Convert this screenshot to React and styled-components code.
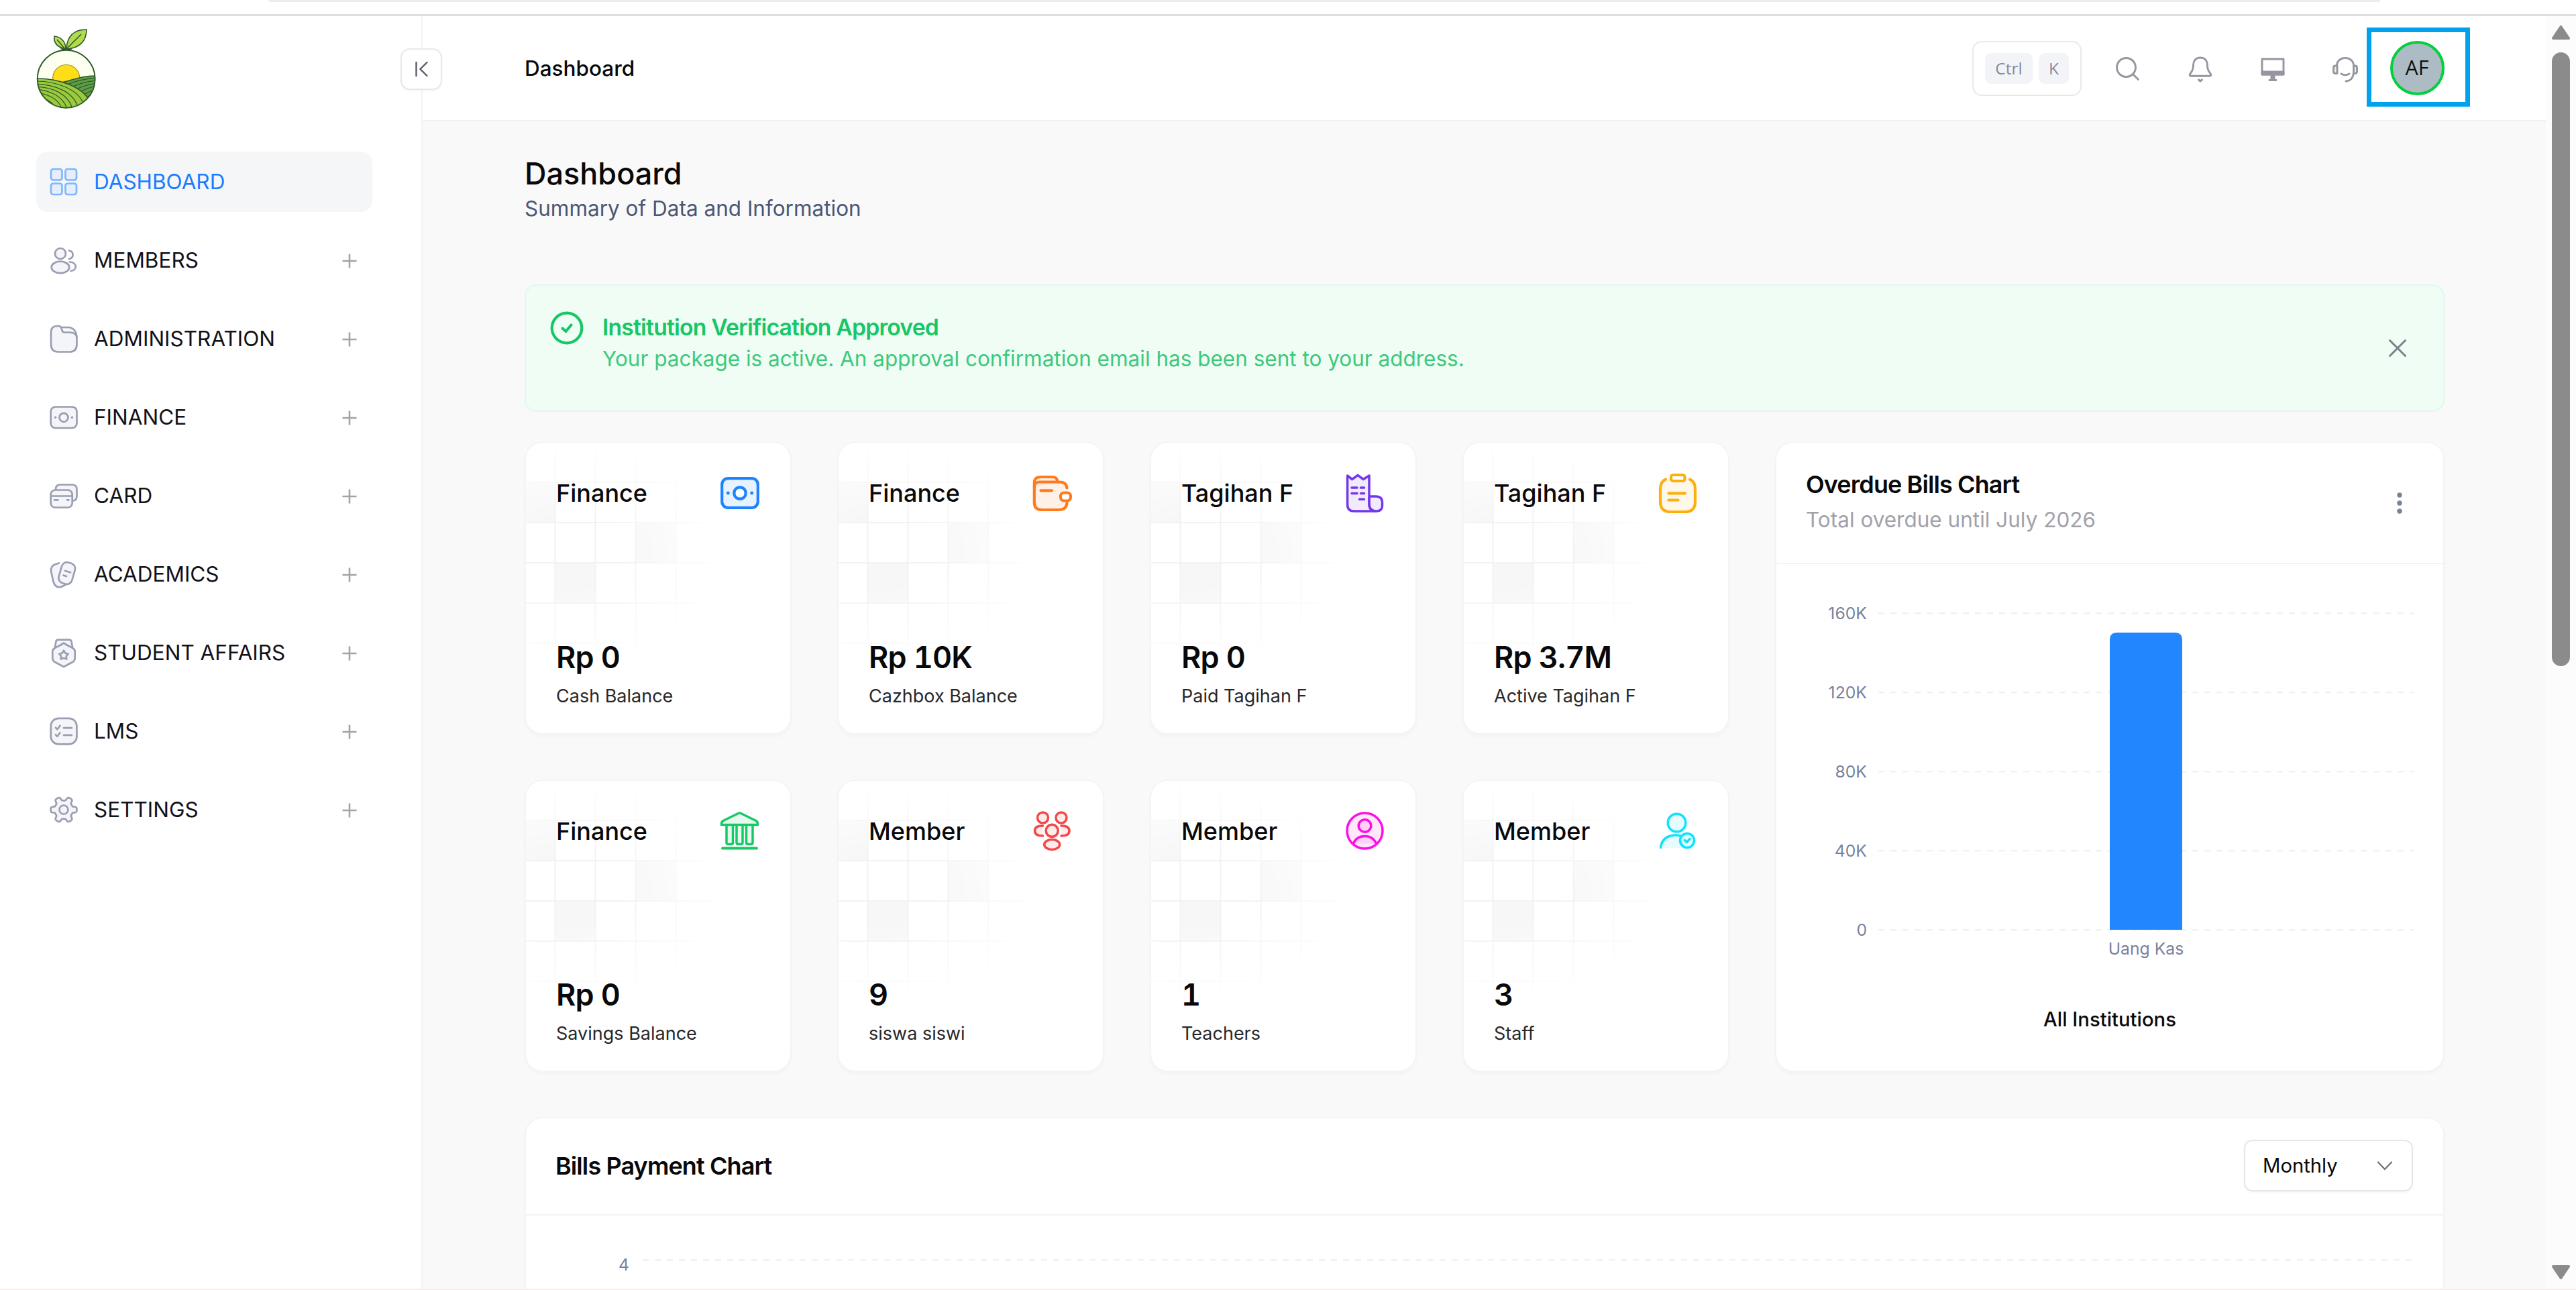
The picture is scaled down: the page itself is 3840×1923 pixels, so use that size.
import styled, { createGlobalStyle } from 'styled-components';

const menu = [
  { label: 'DASHBOARD', icon: 'dashboard', active: true },
  { label: 'MEMBERS', icon: 'members' },
  { label: 'ADMINISTRATION', icon: 'folder' },
  { label: 'FINANCE', icon: 'money' },
  { label: 'CARD', icon: 'cards' },
  { label: 'ACADEMICS', icon: 'notes' },
  { label: 'STUDENT AFFAIRS', icon: 'medal' },
  { label: 'LMS', icon: 'checklist' },
  { label: 'SETTINGS', icon: 'gear' },
];

const stats = [
  { title: 'Finance', value: 'Rp 0', label: 'Cash Balance', icon: 'cash', color: '#1b84ff' },
  { title: 'Finance', value: 'Rp 10K', label: 'Cazhbox Balance', icon: 'wallet', color: '#ff7a1a' },
  { title: 'Tagihan F', value: 'Rp 0', label: 'Paid Tagihan F', icon: 'receipt', color: '#7239ea' },
  { title: 'Tagihan F', value: 'Rp 3.7M', label: 'Active Tagihan F', icon: 'clipboard', color: '#fcb010' },
  { title: 'Finance', value: 'Rp 0', label: 'Savings Balance', icon: 'bank', color: '#17c964' },
  { title: 'Member', value: '9', label: 'siswa siswi', icon: 'people', color: '#f4484b' },
  { title: 'Member', value: '1', label: 'Teachers', icon: 'teacher', color: '#fb10e4' },
  { title: 'Member', value: '3', label: 'Staff', icon: 'staff', color: '#0de3fb' },
];

const ticks = ['160K', '120K', '80K', '40K', '0'];

const gearPath = (() => {
  const points = [];
  for (let i = 0; i < 120; i++) {
    const a = (i / 120) * Math.PI * 2;
    const r = 16.6 + 2.9 * Math.tanh(2.6 * Math.cos(6 * a));
    points.push(`${(21 + r * Math.cos(a)).toFixed(2)} ${(21 + r * Math.sin(a)).toFixed(2)}`);
  }
  return `M${points.join('L')}Z`;
})();

const menuIcons = {
  dashboard: (
    <>
      <rect x="2" y="2" width="16.5" height="16.5" rx="3.5" />
      <rect x="23.5" y="2" width="16.5" height="16.5" rx="3.5" />
      <rect x="2" y="23.5" width="16.5" height="16.5" rx="3.5" />
      <rect x="23.5" y="23.5" width="16.5" height="16.5" rx="3.5" />
    </>
  ),
  members: (
    <>
      <circle cx="16" cy="11" r="8" />
      <ellipse cx="16" cy="31.4" rx="13.3" ry="8.7" />
      <path fill="none" d="M29 6.5C36.5 8 36.5 17.5 29 19M30 23.5C41.5 24.5 41.5 35.5 31.5 37" />
    </>
  ),
  folder: (
    <>
      <path d="M17 4H28Q39 4.500 40.300 18" />
      <path d="M2 12Q2 2 11 2H13.500Q16.500 2 17.500 5L18.500 8.500Q19.500 11.500 23 11.500H30Q40.500 12 40.500 20V29Q40.500 40.500 30 40.500H12.500Q2 40.500 2 29Z" />
    </>
  ),
  money: (
    <>
      <rect x="1.7" y="5.500" width="38.800" height="31.500" rx="7" />
      <circle cx="21" cy="21.300" r="6.500" />
      <path d="M8.500 21.200h.2M33.300 21.200h.2" strokeWidth="3.400" />
    </>
  ),
  cards: (
    <>
      <path d="M9 12V11.500Q9 4.500 16 4.500H33.500Q40.500 4.500 40.500 11.500V21.500Q40.500 28.500 34 28.500" />
      <rect x="1.700" y="12.500" width="32" height="26" rx="6.500" />
      <path d="M2 21.500H33.500M7 27.300H12.500M26 27.300H28.500" />
    </>
  ),
  notes: (
    <>
      <path d="M14 4.500L9 6Q1 8.500 2.200 17L5.500 32Q8.500 42 17 40L24 36.500" />
      <rect x="15.500" y="3.500" width="20.500" height="32" rx="8" transform="rotate(16 25.800 19.500)" />
      <path d="M23 16L31 18.300M20.500 22.600L25 24" />
    </>
  ),
  medal: (
    <>
      <path d="M8 13L9.300 5Q9.800 1.700 13 1.700H29Q32.200 1.700 32.700 5L34 13" />
      <path d="M21 6.500Q23 8.500 33.500 13.500Q37.700 16 37.700 19V29Q37.700 32.500 34.500 34.800L21 42L7.500 34.800Q4.300 32.500 4.300 29V19Q4.300 16 8.500 13.500Q19 8.500 21 6.500Z" />
      <path d="M21 17.700L23.300 21.600L27.700 22.700L24.800 26.100L25.200 30.600L21 28.900L16.800 30.600L17.200 26.100L14.300 22.700L18.700 21.600Z" />
    </>
  ),
  checklist: (
    <>
      <rect x="1.800" y="1.800" width="38.600" height="38.600" rx="11.500" />
      <path fill="none" d="M9 15.800L11.500 18.300L15.500 12.800M9 26.300L11.500 28.800L15.500 23.300M21 16.200H33M21 26.800H33" />
    </>
  ),
  gear: (
    <>
      <path d={gearPath} />
      <circle cx="21" cy="21" r="6.500" />
    </>
  ),
};

const statIcons = {
  cash: (
    <>
      <rect x="2.200" y="7.200" width="53.600" height="43.600" rx="9" />
      <circle cx="29" cy="29" r="8.700" fill="#fff" />
      <path d="M11.200 29h.2M46.600 29h.2" strokeWidth="4.800" />
    </>
  ),
  wallet: (
    <>
      <path d="M1.800 20V14Q1.800 5 11 5H28Q36.500 5 36.500 12.500" />
      <path d="M50.500 21.500Q50 12.500 39 12.500H10Q1.800 12.500 1.800 20.500V43Q1.800 54 13 54H38Q50 54 50.500 43.500" />
      <rect x="41" y="28.500" width="15" height="12" rx="5" fill="#fff" />
      <path d="M11.500 25.300H28" />
    </>
  ),
  receipt: (
    <>
      <path d="M35 34H45Q54.500 34 54.500 43V48Q54.500 56 45.500 56Q35.500 56 35 46Z" />
      <path d="M2.600 3L9.600 8.500L18 2.300L26.300 8.500L35 3V46Q35.500 56 45.500 56H12Q2.600 56 2.600 46Z" />
      <path d="M9 21H17M22.500 21H27.500M9 29.600H17M22.500 29.600H27.500M20.500 38.300H27.500" />
    </>
  ),
  clipboard: (
    <>
      <path d="M11 8.500Q3 12 3 23V42Q3 57 18 57H40Q55 57 55 42V23Q55 12 47 8.500" />
      <rect x="19" y="2" width="20.500" height="9" rx="3" fill="#fff" />
      <path d="M15.500 29.300H40M15.500 39.500H29.500" />
    </>
  ),
  bank: (
    <>
      <path d="M26.500 2.500Q28.500 1.500 30.500 2.500L53 13.500Q56 15.500 55.500 19.500H1.500Q1 15.500 4 13.500Z" />
      <path d="M9 20V46Q9 48.500 11.500 48.500H16Q18.500 48.500 18.500 46V20M24 20V46Q24 48.500 26.500 48.500H30.500Q33 48.500 33 46V20M38.500 20V46Q38.500 48.500 41 48.500H45.500Q48 48.500 48 46V20" />
      <path d="M3 54.600H54" strokeWidth="4" />
    </>
  ),
  people: (
    <>
      <circle cx="14.500" cy="9" r="8" />
      <circle cx="42" cy="9" r="8" />
      <circle cx="28.200" cy="28.300" r="9" />
      <ellipse cx="28.200" cy="49" rx="11.500" ry="7.500" />
      <path d="M14.500 21Q2.500 21 2.500 28.500Q2.500 36 14.500 36M42 21Q54 21 54 28.500Q54 36 42 36" />
    </>
  ),
  teacher: (
    <>
      <circle cx="28.500" cy="28.500" r="26.500" />
      <circle cx="28.500" cy="21" r="9.300" />
      <path d="M11.500 47.500Q16 36.500 28.500 36.500Q41 36.500 45.500 47.500" />
    </>
  ),
  staff: (
    <>
      <circle cx="27.500" cy="16.500" r="13.300" />
      <path stroke="none" d="M3.500 54Q6 35 27 35Q36 35 40 40V54Z" />
      <path fill="none" d="M3.500 53.500Q6 35 27 35Q30 35 33 36" />
      <circle cx="43" cy="43" r="10.500" />
      <path fill="none" d="M39.500 42.500L42.500 45.500L47 40.500" />
    </>
  ),
};

function GridPattern({ id }) {
  return (
    <Pattern viewBox="0 0 300 330">
      <defs>
        <radialGradient id={id} cx="60" cy="160" r="250" gradientUnits="userSpaceOnUse" gradientTransform="translate(0 55) scale(1 .68)">
          <stop offset="0.3" stopColor="#fff" />
          <stop offset="1" stopColor="#fff" stopOpacity="0" />
        </radialGradient>
        <mask id={`${id}-mask`}>
          <rect width="300" height="330" fill={`url(#${id})`} />
        </mask>
      </defs>
      <g mask={`url(#${id}-mask)`}>
        <path d="M0 59h43v60H0zM163 119h60v60h-60zM43 179h60v60H43z" fill="#f7f7f8" />
        <path
          d="M43.500 10V320M103.500 10V320M163.500 10V320M223.500 10V320M0 59H283M0 119H283M0 179H283M0 239H283M0 299H283"
          stroke="#f2f2f4"
          strokeWidth="2"
        />
      </g>
    </Pattern>
  );
}

function Logo() {
  return (
    <svg width="90" height="120" viewBox="0 0 90 120" fill="none" stroke="#2f5a2c" strokeWidth="1.600">
      <defs>
        <clipPath id="globe">
          <circle cx="44.700" cy="75.700" r="43" />
        </clipPath>
      </defs>
      <path d="M44 31C29 28 26 20 27 12C37 13 44 20 44 31Z" fill="#b9dc55" />
      <path d="M31 17L43 31" />
      <path d="M45 31C46 13 55 2 75 2C75 20 64 30 45 31Z" fill="#b3d94c" />
      <path d="M67 9L46 30" />
      <path d="M38 31H52L48 34H42Z" fill="#2f5a2c" />
      <g clipPath="url(#globe)">
        <rect y="30" width="90" height="90" fill="#fdfff0" stroke="none" />
        <circle cx="44.700" cy="74.500" r="20" fill="#ffde17" stroke="#a38f1f" strokeWidth="1.200" />
        <path d="M38 81C55 77 68 71 90 71V120H50Z" fill="#5f9e45" />
        <path d="M46 84Q66 76 90 74M52 88Q70 80 90 78M57 92Q74 84 90 82M62 97Q76 89 90 86M66 102Q78 94 90 91M70 107Q80 99 90 96M74 112Q84 104 90 100" strokeWidth="1.200" />
        <path d="M0 75C32 75 66 86 78 106L70 120H0Z" fill="#9bca3c" />
        <path d="M0 79C28 79 62 90 70 112M0 83C26 84 56 94 62 118M0 87C24 88 48 98 54 120M0 91C22 93 40 102 46 120M0 96C18 98 34 106 38 120M2 102C16 104 26 112 29 120" strokeWidth="1.200" />
      </g>
      <circle cx="44.700" cy="75.700" r="43" strokeWidth="1.900" />
    </svg>
  );
}

function OverdueChart() {
  return (
    <ChartSvg viewBox="0 0 994 599">
      {ticks.map((tick, i) => (
        <g key={tick}>
          <ChartText x="135" y={82 + i * 118} textAnchor="end">
            {tick}
          </ChartText>
          <path d={`M152 ${73 + i * 118}H950`} stroke="#f0f0f3" strokeWidth="2.250" strokeDasharray="9 9" />
        </g>
      ))}
      <path d="M497 545V113Q497 102 508 102H594Q605 102 605 113V545Z" fill="#2286ff" />
      <ChartText x="551" y="582" textAnchor="middle">
        Uang Kas
      </ChartText>
    </ChartSvg>
  );
}

function Sidebar() {
  return (
    <SidebarPanel>
      <LogoSlot>
        <Logo />
      </LogoSlot>
      <Menu>
        {menu.map(({ label, icon, active }) => (
          <MenuItem key={label} $active={active}>
            <MenuIcon viewBox="0 0 42 42" $active={active}>
              {menuIcons[icon]}
            </MenuIcon>
            <MenuLabel>{label}</MenuLabel>
            {!active && (
              <PlusIcon viewBox="0 0 22 22">
                <path d="M11 .5V21.500M.5 11H21.500" />
              </PlusIcon>
            )}
          </MenuItem>
        ))}
      </Menu>
      <CollapseButton aria-label="Collapse">
        <svg width="20" height="24" viewBox="0 0 20 24" fill="none" stroke="#5b5c66" strokeWidth="2.400" strokeLinecap="round">
          <path d="M2.500 2V22M18.500 2L8.500 12L18.500 22" />
        </svg>
      </CollapseButton>
    </SidebarPanel>
  );
}

function TopBar() {
  return (
    <Header>
      <Crumb>Dashboard</Crumb>
      <Shortcut>
        <Key $width="71px">Ctrl</Key>
        <Key $width="45px">K</Key>
      </Shortcut>
      <HeaderIcons>
        <HeaderIcon viewBox="0 0 38 38">
          <circle cx="16.500" cy="16.500" r="14" />
          <path d="M27 27L34.500 34.500" />
        </HeaderIcon>
        <HeaderIcon viewBox="0 0 38 38">
          <path d="M19 2C11.500 2 8.500 7.500 8.500 13C8.500 20 6.500 22 3.500 26.500C2.500 28.300 3.500 29.300 5 29.300H33C34.500 29.300 35.500 28.300 34.500 26.500C31.500 22 29.500 20 29.500 13C29.500 7.500 26.500 2 19 2Z" />
          <path d="M16.500 35L19 37L21.500 35" />
        </HeaderIcon>
        <HeaderIcon viewBox="0 0 38 38">
          <path d="M3 4H35V27H3Z" />
          <path d="M3 23H35V27H3ZM17 28H21V34H17ZM14 35.500H24" fill="#95969f" />
        </HeaderIcon>
        <HeaderIcon viewBox="0 0 38 38">
          <path d="M6.500 14C6.500 -1.500 31.500 -1.500 31.500 14V24Q30.500 36.500 20 37M13 26Q19 29.500 25 26" />
          <path d="M7 14H4.500Q1.500 14 1.500 17V22.500Q1.500 25.500 4.500 25.500H7ZM31.500 14H33.500Q36.500 14 36.500 17V22.500Q36.500 25.500 33.500 25.500H31.500Z" fill="#eeeef2" />
        </HeaderIcon>
      </HeaderIcons>
      <AvatarFrame>
        <Avatar>AF</Avatar>
      </AvatarFrame>
    </Header>
  );
}

function StatCard({ id, title, value, label, icon, color }) {
  return (
    <StatBox>
      <GridPattern id={id} />
      <StatHead>
        <StatTitle>{title}</StatTitle>
        <StatIcon viewBox="0 0 58 58" $color={color} $thin={['receipt', 'people', 'teacher', 'staff', 'bank'].includes(icon)}>
          {statIcons[icon]}
        </StatIcon>
      </StatHead>
      <StatFoot>
        <StatValue>{value}</StatValue>
        <StatLabel>{label}</StatLabel>
      </StatFoot>
    </StatBox>
  );
}

export default function App() {
  return (
    <Page>
      <GlobalStyle />
      <BrowserEdge>
        <AddressBar />
      </BrowserEdge>
      <Body>
        <Sidebar />
        <Main>
          <TopBar />
          <Content>
            <PageTitle>Dashboard</PageTitle>
            <PageSubtitle>Summary of Data and Information</PageSubtitle>

            <Alert>
              <svg width="50" height="50" viewBox="0 0 50 50" fill="none" stroke="#17c666" strokeWidth="4.200" strokeLinecap="round" strokeLinejoin="round">
                <circle cx="25" cy="25" r="22.300" />
                <path d="M18.500 25.500L23.500 30L31.500 20.500" />
              </svg>
              <AlertText>
                <AlertTitle>Institution Verification Approved</AlertTitle>
                <AlertBody>Your package is active. An approval confirmation email has been sent to your address.</AlertBody>
              </AlertText>
              <svg width="28" height="28" viewBox="0 0 28 28" stroke="#7f828a" strokeWidth="3" strokeLinecap="round">
                <path d="M2.500 2.500L25.500 25.500M25.500 2.500L2.500 25.500" />
              </svg>
            </Alert>

            <Overview>
              <StatGrid>
                {stats.map((stat, i) => (
                  <StatCard key={i} id={`pattern${i}`} {...stat} />
                ))}
              </StatGrid>
              <Card>
                <OverdueHeader>
                  <div>
                    <CardTitle>Overdue Bills Chart</CardTitle>
                    <CardSubtitle>Total overdue until July 2026</CardSubtitle>
                  </div>
                  <svg width="40" height="40" viewBox="0 0 40 40" fill="#78829d">
                    <circle cx="20" cy="8" r="3.700" />
                    <circle cx="20" cy="20" r="3.700" />
                    <circle cx="20" cy="32" r="3.700" />
                  </svg>
                </OverdueHeader>
                <OverdueChart />
                <ChartCaption>All Institutions</ChartCaption>
              </Card>
            </Overview>

            <PaymentCard>
              <PaymentHeader>
                <CardTitle>Bills Payment Chart</CardTitle>
                <Select>
                  Monthly
                  <svg width="24" height="16" viewBox="0 0 24 16" fill="none" stroke="#71717a" strokeWidth="2.300" strokeLinecap="round" strokeLinejoin="round">
                    <path d="M2 2.500L12 13L22 2.500" />
                  </svg>
                </Select>
              </PaymentHeader>
              <ChartSvg viewBox="0 0 2858 200">
                <ChartText x="154" y="82" textAnchor="end">
                  4
                </ChartText>
                <path d="M174 66H2820" stroke="#f0f0f3" strokeWidth="2.250" strokeDasharray="9 9" />
              </ChartSvg>
            </PaymentCard>
          </Content>
        </Main>
        <Scrollbar>
          <Arrow viewBox="0 0 27 21">
            <path d="M13.500 2L25 19H2Z" />
          </Arrow>
          <Thumb />
          <Arrow viewBox="0 0 27 21">
            <path d="M13.500 19L25 2H2Z" />
          </Arrow>
        </Scrollbar>
      </Body>
    </Page>
  );
}

const GlobalStyle = createGlobalStyle`
  * {
    box-sizing: border-box;
  }

  body {
    margin: 0;
    overflow: hidden;
    font-family: Inter, 'Liberation Sans', sans-serif;
    color: #09090b;
  }

  svg {
    display: block;
    flex-shrink: 0;
  }
`;

const Page = styled.div`
  display: flex;
  flex-direction: column;
  width: 3840px;
  height: 1923px;
  overflow: hidden;
  background: #fff;
  border-bottom: 2px solid #fbe9ec;
`;

const BrowserEdge = styled.div`
  flex-shrink: 0;
  height: 24px;
  padding: 0 292px 0 400px;
  border-bottom: 3px solid #dedede;
`;

const AddressBar = styled.div`
  height: 3px;
  background: #ececec;
  border-radius: 0 0 6px 6px;
`;

const Body = styled.div`
  display: flex;
  flex: 1;
  min-height: 0;
`;

const SidebarPanel = styled.aside`
  position: relative;
  flex-shrink: 0;
  width: 630px;
  padding: 18px 73px 0 54px;
  border-right: 2px solid #f3f3f4;
`;

const LogoSlot = styled.div`
  height: 184px;
`;

const Menu = styled.nav`
  display: grid;
  gap: 27px;
`;

const MenuItem = styled.div`
  display: flex;
  align-items: center;
  height: 90px;
  padding: 0 23px 0 20px;
  border-radius: 17px;
  background: ${({ $active }) => ($active ? '#f5f6f8' : 'transparent')};
  color: ${({ $active }) => ($active ? '#1b7cff' : '#111118')};
`;

const MenuIcon = styled.svg`
  width: 42px;
  height: 42px;
  margin-right: 24px;
  overflow: visible;
  fill: ${({ $active }) => ($active ? '#e6eefb' : '#f3f5f9')};
  stroke: ${({ $active }) => ($active ? '#7fb6ff' : '#9b9db3')};
  stroke-width: 2.7;
  stroke-linecap: round;
  stroke-linejoin: round;
`;

const MenuLabel = styled.span`
  flex: 1;
  margin-top: -1px;
  font-size: 31.5px;
`;

const PlusIcon = styled.svg`
  width: 22px;
  height: 22px;
  margin-top: 2px;
  stroke: #a2a2a8;
  stroke-width: 2.6;
`;

const CollapseButton = styled.button`
  position: absolute;
  top: 48px;
  right: -31px;
  display: flex;
  align-items: center;
  justify-content: center;
  width: 62px;
  height: 62px;
  border: 2px solid #e8e8ea;
  border-radius: 14px;
  background: #fff;
  box-shadow: 0 2px 3px rgba(0, 0, 0, 0.04);
`;

const Main = styled.main`
  display: flex;
  flex-direction: column;
  width: 3165px;
  background: #f9f9f9;
`;

const Header = styled.header`
  display: flex;
  align-items: center;
  flex-shrink: 0;
  height: 157px;
  padding: 0 113px 0 152px;
  background: #fff;
  border-bottom: 2px solid #f1f1f2;
`;

const Crumb = styled.span`
  flex: 1;
  margin-top: -1px;
  font-size: 31.5px;
  font-weight: 500;
`;

const Shortcut = styled.div`
  display: flex;
  align-items: center;
  justify-content: center;
  gap: 9px;
  width: 163px;
  height: 82px;
  margin-right: 50px;
  border: 2px solid #e9e9eb;
  border-radius: 14px;
`;

const Key = styled.span`
  width: ${({ $width }) => $width};
  border-radius: 9px;
  background: #f3f4f7;
  color: #858b99;
  font: 500 24.5px/46px 'Open Sans', sans-serif;
  text-align: center;
`;

const HeaderIcons = styled.div`
  display: flex;
  gap: 70px;
  margin: 2px 13px 0 0;
`;

const HeaderIcon = styled.svg`
  width: 38px;
  height: 38px;
  overflow: visible;
  fill: none;
  stroke: #95969f;
  stroke-width: 2.9;
  stroke-linecap: round;
  stroke-linejoin: round;
`;

const AvatarFrame = styled.div`
  display: flex;
  align-items: center;
  justify-content: center;
  width: 154px;
  height: 118px;
  margin-top: -4px;
  border: 7px solid #00a2ee;
`;

const Avatar = styled.div`
  width: 81px;
  height: 81px;
  margin: 4px 4px 0 0;
  border: 4.5px solid #04cf3f;
  border-radius: 50%;
  background: #adbcc4;
  color: #10100e;
  font: 400 30.5px/70px 'Open Sans', sans-serif;
  text-align: center;
`;

const Content = styled.div`
  flex: 1;
  min-height: 0;
  padding: 51px 151px 0 152px;
  overflow: hidden;
`;

const PageTitle = styled.h1`
  margin: 0 0 2px;
  font-size: 45px;
  font-weight: 500;
  line-height: 54px;
`;

const PageSubtitle = styled.p`
  margin: 0 0 90px;
  color: #4b5675;
  font-size: 31.5px;
  line-height: 46px;
`;

const Alert = styled.section`
  display: flex;
  align-items: center;
  height: 190px;
  margin-bottom: 44px;
  padding: 0 54px 0 36px;
  border: 2px solid #e0f9eb;
  border-radius: 18px;
  background: #effdf4;

  > svg:first-child {
    align-self: flex-start;
    margin-top: 38px;
  }
`;

const AlertText = styled.div`
  display: grid;
  gap: 4px;
  flex: 1;
  align-self: flex-start;
  margin: 42px 0 0 28px;
  color: #17c666;
`;

const AlertTitle = styled.strong`
  font-size: 33.75px;
  font-weight: 600;
  line-height: 40px;
  letter-spacing: -0.025em;
`;

const AlertBody = styled.span`
  color: #3dc97c;
  font-size: 31.5px;
  line-height: 46px;
`;

const Overview = styled.div`
  display: grid;
  grid-template-columns: 1796px 998px;
  gap: 68px;
  height: 940px;
  margin-bottom: 67px;
`;

const StatGrid = styled.div`
  display: grid;
  grid-template-columns: repeat(4, 398px);
  grid-template-rows: 1fr 1fr;
  gap: 67px 68px;
`;

const Card = styled.section`
  border: 2px solid #f4f4f5;
  border-radius: 27px;
  background: #fff;
  box-shadow: 0 4px 5px rgba(0, 0, 0, 0.025);
`;

const StatBox = styled(Card)`
  position: relative;
  display: flex;
  flex-direction: column;
  justify-content: space-between;
  padding: 46px 46px 37px 45px;
  overflow: hidden;
`;

const Pattern = styled.svg`
  position: absolute;
  top: 0;
  left: 0;
  width: 300px;
  height: 330px;
`;

const StatHead = styled.div`
  position: relative;
  display: flex;
  align-items: center;
  justify-content: space-between;
`;

const StatTitle = styled.h3`
  margin: 0;
  font-size: 36px;
  font-weight: 500;
`;

const StatIcon = styled.svg`
  width: 58px;
  height: 58px;
  overflow: visible;
  fill: ${({ $color }) => $color}1a;
  stroke: ${({ $color }) => $color};
  stroke-width: ${({ $thin }) => ($thin ? 3.5 : 4.2)};
  stroke-linecap: round;
  stroke-linejoin: round;
`;

const StatFoot = styled.div`
  position: relative;
  display: grid;
  gap: 18px;
`;

const StatValue = styled.span`
  font-size: 45px;
  font-weight: 600;
  line-height: 45px;
  letter-spacing: -0.02em;
  font-variant-numeric: tabular-nums;
`;

const StatLabel = styled.span`
  color: #27272a;
  font-size: 27px;
  line-height: 36px;
`;

const OverdueHeader = styled.header`
  display: flex;
  align-items: center;
  justify-content: space-between;
  height: 181px;
  padding: 0 45px 0 44px;
  border-bottom: 2px solid #f2f2f4;
`;

const CardTitle = styled.h2`
  margin: 0;
  font-size: 36px;
  font-weight: 600;
  line-height: 36px;
  letter-spacing: -0.025em;
`;

const CardSubtitle = styled.p`
  margin: 11px 0 -4px;
  color: #a1a1aa;
  font-size: 31.5px;
  line-height: 48px;
`;

const ChartSvg = styled.svg`
  width: 100%;
`;

const ChartText = styled.text`
  fill: #78829d;
  font-size: 24.75px;
`;

const ChartCaption = styled.p`
  margin: 62px 0 0;
  font-size: 29.25px;
  font-weight: 500;
  line-height: 36px;
  text-align: center;
`;

const PaymentCard = styled(Card)`
  height: 900px;
`;

const PaymentHeader = styled.header`
  display: flex;
  align-items: center;
  justify-content: space-between;
  height: 145px;
  padding: 0 45px 2px 44px;
  border-bottom: 2px solid #f2f2f4;
`;

const Select = styled.div`
  display: flex;
  align-items: center;
  justify-content: space-between;
  width: 252px;
  height: 77px;
  padding: 0 28px 0 26px;
  border: 2px solid #e6e6e9;
  border-radius: 13px;
  box-shadow: 0 2px 3px rgba(0, 0, 0, 0.04);
  font-size: 29.25px;
`;

const Scrollbar = styled.div`
  display: flex;
  flex-direction: column;
  align-items: center;
  justify-content: space-between;
  width: 45px;
  padding: 14px 0 14px;
  background: #fcfcfc;
`;

const Arrow = styled.svg`
  width: 27px;
  height: 21px;
  fill: #8b8b8b;
  stroke: #8b8b8b;
  stroke-width: 4;
  stroke-linejoin: round;
`;

const Thumb = styled.div`
  width: 27px;
  height: 915px;
  margin: 19px 0 auto;
  border-radius: 14px;
  background: #8b8b8b;
`;
